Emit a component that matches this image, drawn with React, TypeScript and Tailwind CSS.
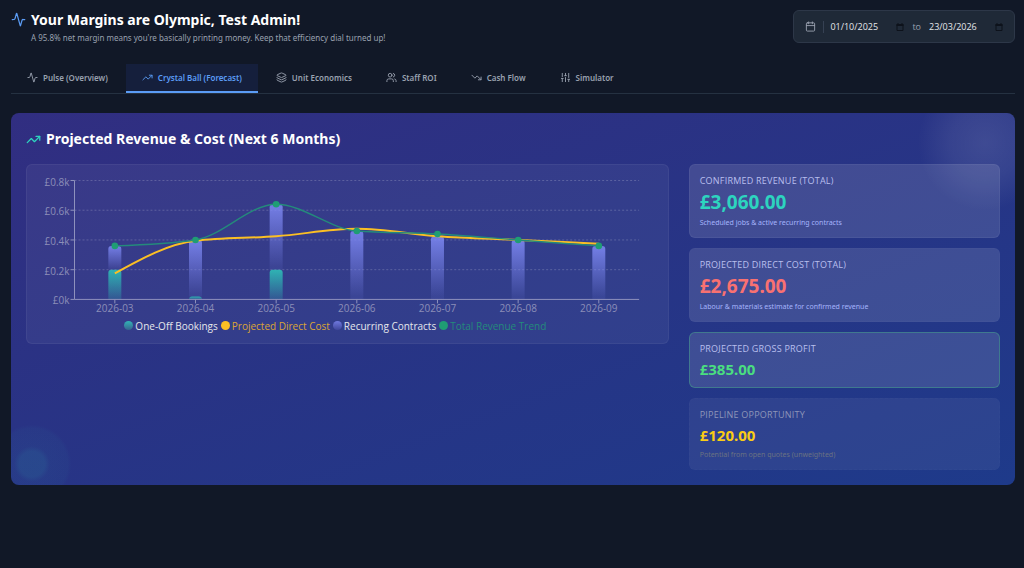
import type { ReactNode } from "react";
import {
  Activity,
  Calendar,
  Layers,
  SlidersVertical,
  TrendingDown,
  TrendingUp,
  Users,
} from "lucide-react";
import clsx from "clsx";

const tabs = [
  { label: "Pulse (Overview)", icon: Activity },
  { label: "Crystal Ball (Forecast)", icon: TrendingUp },
  { label: "Unit Economics", icon: Layers },
  { label: "Staff ROI", icon: Users },
  { label: "Cash Flow", icon: TrendingDown },
  { label: "Simulator", icon: SlidersVertical },
];

const forecast = [
  { month: "2026-03", oneOff: 200, recurring: 160, total: 360, cost: 175 },
  { month: "2026-04", oneOff: 20, recurring: 380, total: 400, cost: 395 },
  { month: "2026-05", oneOff: 200, recurring: 440, total: 640, cost: 425 },
  { month: "2026-06", oneOff: 0, recurring: 460, total: 460, cost: 475 },
  { month: "2026-07", oneOff: 0, recurring: 425, total: 440, cost: 425 },
  { month: "2026-08", oneOff: 0, recurring: 400, total: 400, cost: 400 },
  { month: "2026-09", oneOff: 0, recurring: 360, total: 360, cost: 375 },
];

const CHART = { width: 621, height: 143, left: 37.5, right: 602.5, top: 5.5, bottom: 124.5 };
const MAX = 800;
const BAR = 13;

const step = (CHART.right - CHART.left) / forecast.length;
const xAt = (i: number) => CHART.left + step * (i + 0.5);
const yAt = (v: number) =>
  CHART.bottom - (v / MAX) * (CHART.bottom - CHART.top);

// monotone cubic through evenly spaced points
function curve(values: number[]) {
  const pts = values.map((v, i) => [xAt(i), yAt(v)]);
  const n = pts.length;
  const s = pts.slice(1).map((p, i) => (p[1] - pts[i][1]) / step);
  const m = pts.map((_, i) => {
    if (i === 0 || i === n - 1) return 0;
    const a = s[i - 1];
    const b = s[i];
    return (
      (Math.sign(a) + Math.sign(b)) *
      Math.min(Math.abs(a), Math.abs(b), Math.abs(a + b) / 4)
    );
  });
  m[0] = (3 * s[0] - m[1]) / 2;
  m[n - 1] = (3 * s[n - 2] - m[n - 2]) / 2;
  const d = step / 3;
  return pts
    .map(([x, y], i) => {
      if (i === 0) return `M${x},${y}`;
      const [px, py] = pts[i - 1];
      return `C${px + d},${py + d * m[i - 1]} ${x - d},${y - d * m[i]} ${x},${y}`;
    })
    .join("");
}

function roundedBar(x: number, y: number, h: number) {
  const r = Math.min(3, h);
  return `M${x},${y + h}V${y + r}Q${x},${y} ${x + r},${y}H${x + BAR - r}Q${x + BAR},${y} ${x + BAR},${y + r}V${y + h}Z`;
}

function ForecastChart() {
  return (
    <svg
      viewBox={`0 0 ${CHART.width} ${CHART.height}`}
      className="block w-full"
      role="img"
      aria-label="Projected revenue and cost by month"
    >
      <defs>
        <linearGradient id="oneOff" x1="0" y1="0" x2="0" y2="1">
          <stop offset="5%" stopColor="#2dd4bf" stopOpacity={0.75} />
          <stop offset="95%" stopColor="#2dd4bf" stopOpacity={0.2} />
        </linearGradient>
        <linearGradient id="recurring" x1="0" y1="0" x2="0" y2="1">
          <stop offset="5%" stopColor="#818cf8" stopOpacity={0.8} />
          <stop offset="95%" stopColor="#818cf8" stopOpacity={0.1} />
        </linearGradient>
      </defs>
      {[200, 400, 600, 800].map((v) => (
        <line
          key={v}
          x1={CHART.left}
          x2={CHART.right}
          y1={yAt(v)}
          y2={yAt(v)}
          stroke="#fff"
          strokeOpacity={0.2}
          strokeDasharray="2 2"
        />
      ))}
      {forecast.map((d, i) => {
        const x = xAt(i) - BAR / 2;
        const split = yAt(d.oneOff);
        const top = yAt(d.oneOff + d.recurring);
        return (
          <g key={d.month}>
            <path d={roundedBar(x, top, split - top)} fill="url(#recurring)" />
            {d.oneOff > 0 && (
              <path
                d={roundedBar(x, split, CHART.bottom - split)}
                fill="url(#oneOff)"
              />
            )}
          </g>
        );
      })}
      <g stroke="#8f92bd" strokeWidth={1}>
        <line x1={CHART.left} x2={CHART.left} y1={CHART.top} y2={CHART.bottom} />
        <line x1={CHART.left} x2={CHART.right} y1={CHART.bottom} y2={CHART.bottom} />
        {[0, 200, 400, 600, 800].map((v) => (
          <line key={v} x1={CHART.left - 4} x2={CHART.left} y1={yAt(v)} y2={yAt(v)} />
        ))}
        {forecast.map((d, i) => (
          <line key={d.month} x1={xAt(i)} x2={xAt(i)} y1={CHART.bottom} y2={CHART.bottom + 4} />
        ))}
      </g>
      <g className="fill-[#8c8eb8] text-[10px]">
        {[0, 200, 400, 600, 800].map((v) => (
          <text key={v} x={CHART.left - 5} y={yAt(v) + 5} textAnchor="end">
            {v === 0 ? "£0k" : `£${v / 1000}k`}
          </text>
        ))}
        {forecast.map((d, i) => (
          <text key={d.month} x={xAt(i)} y={CHART.bottom + 13} textAnchor="middle">
            {d.month}
          </text>
        ))}
      </g>
      <path
        d={curve(forecast.map((d) => d.cost))}
        fill="none"
        stroke="#fbbf24"
        strokeWidth={2}
      />
      <path
        d={curve(forecast.map((d) => d.total))}
        fill="none"
        stroke="#248a7b"
        strokeWidth={1.4}
      />
      {forecast.map((d, i) => (
        <circle key={d.month} cx={xAt(i)} cy={yAt(d.total)} r={3.3} fill="#1f9d74" />
      ))}
    </svg>
  );
}

function LegendItem({ dot, text, children }: { dot: string; text: string; children: ReactNode }) {
  return (
    <li className={clsx("flex items-center gap-0.5", text)}>
      <span className={clsx("size-[9px] rounded-full", dot)} />
      {children}
    </li>
  );
}

function DateField({ label, value }: { label: string; value: string }) {
  return (
    <div className="flex items-center">
      <input
        type="text"
        aria-label={label}
        defaultValue={value}
        className="w-[66px] bg-transparent text-[9px] font-medium leading-4 text-gray-200 outline-none"
      />
      <svg viewBox="0 0 8 8" className="size-2 text-[#0d121b]" aria-hidden="true">
        <path d="M1 1.5h6v6H1z" fill="none" stroke="currentColor" />
        <path d="M.5 1h7v2h-7zM1.5 0h1v1h-1zM5.5 0h1v1h-1z" fill="currentColor" />
      </svg>
    </div>
  );
}

export default function App() {
  return (
    <div className="min-h-screen bg-[#111827] pt-2.5 pr-[9px] pl-[11px] font-['Open_Sans','Segoe_UI',sans-serif] text-white">
      <header className="flex items-start justify-between">
        <div className="flex gap-[5px] font-['Noto_Sans',sans-serif]">
          <Activity size={15} className="mt-0.5 text-[#5b9cf5]" />
          <div>
            <h1 className="text-sm font-bold leading-5">
              Your Margins are Olympic, Test Admin!
            </h1>
            <p className="text-[8px] leading-4 text-gray-400">
              A 95.8% net margin means you're basically printing money. Keep that
              efficiency dial turned up!
            </p>
          </div>
        </div>
        <div className="flex h-[33px] items-center rounded-md border border-[#2d3748] bg-[#1f2937] px-[11px]">
          <Calendar size={11} className="text-gray-400" />
          <div className="ml-[7px] h-3 w-px bg-gray-700" />
          <div className="ml-1.5 flex items-center gap-2">
            <DateField label="From date" value="01/10/2025" />
            <span className="text-[9px] text-gray-400">to</span>
            <DateField label="To date" value="23/03/2026" />
          </div>
        </div>
      </header>

      <nav className="mt-[18px] flex gap-0.5 border-b border-[#253141]">
        {tabs.map(({ label, icon: Icon }, i) => (
          <button
            key={label}
            type="button"
            className={clsx(
              "flex h-[29px] items-center gap-[5px] border-b-2 px-4 font-['Noto_Sans',sans-serif] text-[8px] font-semibold",
              i === 1
                ? "border-[#5b9cf5] bg-[#151f3c] text-[#5b9cf5]"
                : "border-transparent text-gray-400"
            )}
          >
            <Icon size={11} />
            {label}
          </button>
        ))}
      </nav>

      <section className="relative mt-[19px] overflow-hidden rounded-lg bg-linear-to-br/srgb from-[#312e81] to-[#1e3a8a] p-[15px]">
        <div className="absolute -top-10 -right-10 size-[140px] rounded-full bg-[radial-gradient(circle,rgba(255,255,255,0.11),rgba(255,255,255,0.07)_35%,transparent_68%)]" />
        <div className="absolute -bottom-6 -left-6 size-[90px] rounded-full bg-[radial-gradient(circle,rgba(45,150,170,0.2)_20%,rgba(45,150,170,0.08)_28%,rgba(45,150,170,0.06)_56%,transparent_62%)]" />

        <h2 className="relative mb-3.5 flex items-center gap-[5px] font-['Noto_Sans',sans-serif] text-sm font-bold leading-[22px]">
          <TrendingUp size={15} className="text-[#2dd4bf]" />
          Projected Revenue &amp; Cost (Next 6 Months)
        </h2>

        <div className="relative grid grid-cols-3 items-start gap-5">
          <div className="col-span-2 rounded-md border border-white/5 bg-white/5 px-2.5 pt-2.5 pb-[9px]">
            <ForecastChart />
            <ul className="flex justify-center gap-[3px] pr-6 text-[10px] leading-4">
              <LegendItem dot="bg-linear-to-b from-[#2fb5b5] to-[#35638f]" text="text-gray-200">
                One-Off Bookings
              </LegendItem>
              <LegendItem dot="bg-[#fbbf24]" text="text-[#dba535]">
                Projected Direct Cost
              </LegendItem>
              <LegendItem dot="bg-linear-to-b from-[#7079df] to-[#40479c]" text="text-gray-200">
                Recurring Contracts
              </LegendItem>
              <LegendItem dot="bg-[#1f9d74]" text="text-[#248a7b]">
                Total Revenue Trend
              </LegendItem>
            </ul>
          </div>

          <div className="flex flex-col gap-2.5 font-['Noto_Sans',sans-serif]">
            <div className="rounded-md border border-white/5 bg-white/12 px-2.5 pt-[9px] pb-[7px]">
              <p className="font-['Open_Sans',sans-serif] text-[9px] leading-[14px] tracking-wide text-[#b9bfee]">
                CONFIRMED REVENUE (TOTAL)
              </p>
              <p className="mt-0.5 text-[19px] font-bold leading-6 text-[#2dd4bf]">£3,060.00</p>
              <p className="mt-0.5 text-[7px] leading-[14px] text-[#a5b4fc]">
                Scheduled jobs &amp; active recurring contracts
              </p>
            </div>
            <div className="rounded-md border border-white/2 bg-white/12 px-2.5 pt-[9px] pb-[7px]">
              <p className="font-['Open_Sans',sans-serif] text-[9px] leading-[14px] tracking-wide text-[#b9bfee]">
                PROJECTED DIRECT COST (TOTAL)
              </p>
              <p className="mt-0.5 text-[19px] font-bold leading-6 text-[#f87171]">£2,675.00</p>
              <p className="mt-0.5 text-[7px] leading-[14px] text-[#a5b4fc]">
                Labour &amp; materials estimate for confirmed revenue
              </p>
            </div>
            <div className="rounded-md border border-[#4ade80]/30 bg-white/12 px-2.5 pt-[9px] pb-[7px]">
              <p className="font-['Open_Sans',sans-serif] text-[9px] leading-[14px] tracking-wide text-[#b9bfee]">
                PROJECTED GROSS PROFIT
              </p>
              <p className="mt-0.5 text-[15px] font-bold leading-[22px] text-[#4ade80]">£385.00</p>
            </div>
            <div className="rounded-md border border-dashed border-white/2 bg-white/6 px-2.5 pt-[9px] pb-[7px]">
              <p className="font-['Open_Sans',sans-serif] text-[9px] leading-[14px] tracking-wide text-[#8d95b8]">
                PIPELINE OPPORTUNITY
              </p>
              <p className="mt-0.5 text-[15px] font-bold leading-[22px] text-[#facc15]">£120.00</p>
              <p className="mt-0.5 text-[7px] leading-[14px] text-gray-500">
                Potential from open quotes (unweighted)
              </p>
            </div>
          </div>
        </div>
      </section>
    </div>
  );
}
